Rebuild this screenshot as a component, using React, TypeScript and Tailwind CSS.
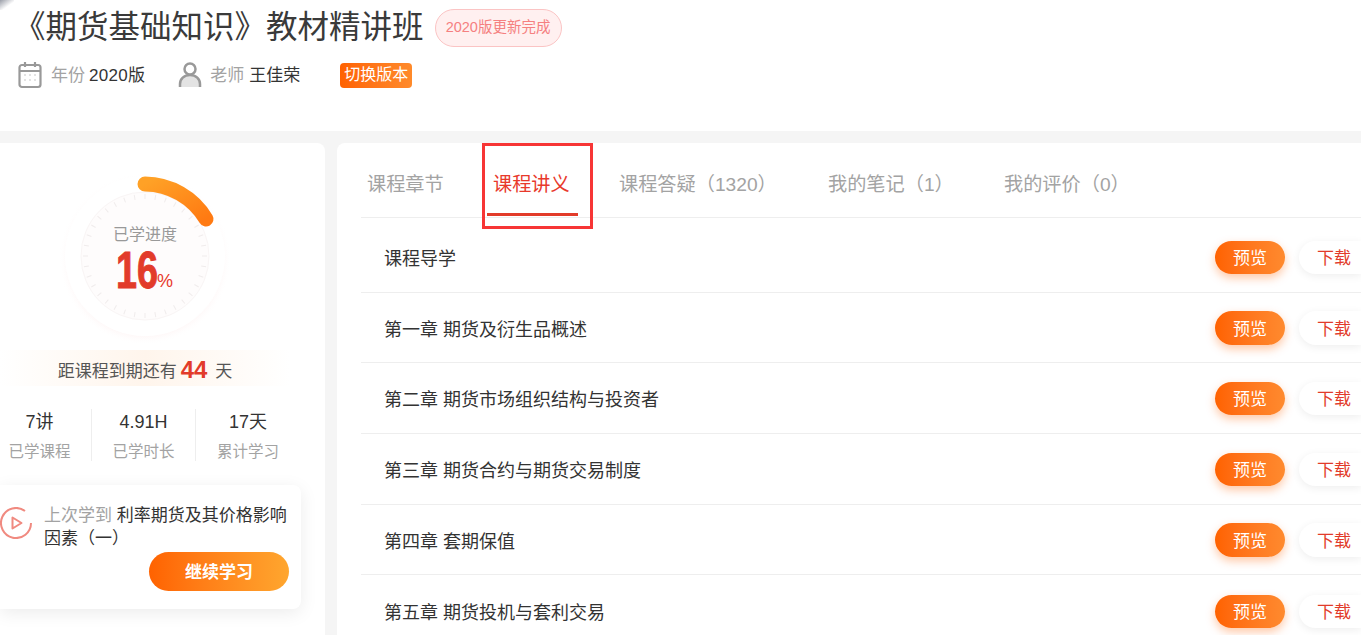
import { useId } from "react";

const cjk = "font-['Liberation_Sans','Noto_Sans_CJK_SC',sans-serif]";

const tabs = [
  { label: "课程章节", width: "w-[126px]" },
  { label: "课程讲义", active: true, width: "w-[126px]" },
  { label: "课程答疑（1320）", width: "w-[209px]" },
  { label: "我的笔记（1）", width: "w-[176px]" },
  { label: "我的评价（0）", width: "w-[140px]" },
];

const chapters = [
  "课程导学",
  "第一章 期货及衍生品概述",
  "第二章 期货市场组织结构与投资者",
  "第三章 期货合约与期货交易制度",
  "第四章 套期保值",
  "第五章 期货投机与套利交易",
];

const stats = [
  { value: "7讲", label: "已学课程" },
  { value: "4.91H", label: "已学时长" },
  { value: "17天", label: "累计学习" },
];

function ProgressRing() {
  const id = useId();
  const ticks = Array.from({ length: 36 }, (_, i) => i * 10);
  return (
    <svg width="176" height="176" viewBox="0 0 176 176" className="absolute left-0 top-0">
      <defs>
        <linearGradient id={id + "arc"} x1="0" y1="0" x2="1" y2="1">
          <stop offset="0" stopColor="#ffa126" />
          <stop offset="1" stopColor="#ff7a12" />
        </linearGradient>
        <radialGradient id={id + "glow"}>
          <stop offset="0.84" stopColor="#fdeeee" stopOpacity="0.9" />
          <stop offset="1" stopColor="#ffffff" stopOpacity="0" />
        </radialGradient>
      </defs>
      <circle cx="88" cy="90" r="86" fill={`url(#${id}glow)`} />
      <circle cx="88" cy="87" r="80" fill="#ffffff" />
      <circle cx="88" cy="87" r="64" fill="#fefcfc" stroke="#f9f5f5" strokeWidth="1" />
      {ticks.map((a) => (
        <line
          key={a}
          x1="88"
          y1="25"
          x2="88"
          y2="30"
          stroke="#f0ecec"
          strokeWidth="1"
          transform={`rotate(${a} 88 87)`}
        />
      ))}
      <path
        d="M 88 15 A 72 72 0 0 1 149 50"
        fill="none"
        stroke={`url(#${id}arc)`}
        strokeWidth="15"
        strokeLinecap="round"
      />
    </svg>
  );
}

function CalendarIcon() {
  return (
    <svg width="24" height="28" viewBox="0 0 24 28" fill="none" stroke="#999" strokeWidth="2.200">
      <rect x="1.500" y="4" width="21" height="22" rx="2.500" />
      <path d="M1.500 10h21M7 1v5M17 1v5" />
      <path d="M6 14h2M11 14h2M16 14h2M6 19h2M11 19h2M16 19h2" stroke="#e3e3e3" />
    </svg>
  );
}

function UserIcon() {
  return (
    <svg width="24" height="28" viewBox="0 0 24 28" fill="none">
      <path d="M2 26v-3c0-5 4-9 10-9s10 4 10 9v3z" fill="#e3e3e3" />
      <path d="M2 26v-3c0-5 4-9 10-9s10 4 10 9v3" stroke="#999" strokeWidth="2.500" />
      <circle cx="12" cy="8" r="5.500" stroke="#999" strokeWidth="2.500" fill="#fff" />
    </svg>
  );
}

function PlayIcon() {
  return (
    <svg width="32" height="32" viewBox="0 0 32 32" fill="none" stroke="#f08a80" strokeWidth="2">
      <path d="M25 4A15 15 0 1 0 31 16" />
      <path d="M12.500 10.500v11l9-5.500z" strokeLinejoin="round" />
    </svg>
  );
}

export default function App() {
  return (
    <div className={`${cjk} relative h-[635px] w-[1361px] overflow-hidden bg-[#f5f5f5] text-[#333]`}>
      <div className="absolute left-0 top-0 h-[10px] w-[14px] bg-gradient-to-br from-[#9a9ea8] to-transparent to-60%" />
      <header className="h-[131px] bg-white pl-[18px] pt-[9px]">
        <div className="flex h-[38px] items-center">
          <h1 className="ml-[-4px] mt-[-2px] text-[31.5px] leading-[38px] text-[#3a3a3a]">《期货基础知识》教材精讲班</h1>
          <span className="ml-[11px] flex h-[38px] w-[127px] items-center justify-center rounded-full border border-[#fbc4c4] bg-[#fff0f0] text-[14.5px] text-[#f58080]">
            2020版更新完成
          </span>
        </div>
        <div className="mt-[14px] flex h-[28px] items-center text-[17px]">
          <CalendarIcon />
          <span className="ml-[9px] pt-[1px] text-[#a3a3a3]">年份</span>
          <span className="ml-[4px] pt-[1px] tracking-[0.3px] text-[#333]">2020版</span>
          <span className="ml-[33px]">
            <UserIcon />
          </span>
          <span className="ml-[8px] pt-[1px] text-[#a3a3a3]">老师</span>
          <span className="ml-[5px] pt-[1px] text-[#333]">王佳荣</span>
          <span className="ml-[40px] flex h-[25px] w-[72px] items-center justify-center rounded-[4px] bg-gradient-to-r from-[#ff6200] to-[#ff8a2a] text-[16px] text-white">
            切换版本
          </span>
        </div>
      </header>

      <main className="mt-[12px] flex gap-[12px]">
        <aside className="h-[600px] w-[325px] shrink-0 rounded-r-[8px] bg-white pt-[26px]">
          <div className="relative ml-[57px] h-[176px] w-[176px]">
            <ProgressRing />
            <div className="absolute left-0 top-[55px] w-full text-center text-[16px] leading-[22px] text-[#999]">
              已学进度
            </div>
            <span className="absolute left-[59px] top-[77px] origin-left scale-x-[0.74] font-['Liberation_Sans',sans-serif] text-[51px] font-bold leading-[50px] text-[#e23b2a] [-webkit-text-stroke:1px_#e23b2a]">
              16
            </span>
            <span className="absolute left-[100px] top-[102px] font-['Liberation_Sans',sans-serif] text-[18px] leading-[20px] text-[#e8392b]">
              %
            </span>
          </div>
          <div className="mt-[5px] flex h-[36px] w-[290px] items-center justify-center bg-gradient-to-r from-white via-[#fff5ec] to-white pt-[7px] text-[17px] text-[#555]">
            <span>距课程到期还有</span>
            <span className="mx-[4px] mt-[-4px] text-[24px] font-bold leading-[30px] text-[#e23b2a]">44</span>
            <span className="ml-[4px]">天</span>
          </div>
          <div className="ml-[-12px] mt-[23px] flex h-[52px]">
            {stats.map((s, i) => (
              <div
                key={s.label}
                className={`flex w-[104px] flex-col items-center ${i < 2 ? "border-r border-[#eee]" : ""}`}
              >
                <span className="text-[18px] leading-[26px] text-[#333]">{s.value}</span>
                <span className="mt-[6px] text-[15.5px] leading-[22px] text-[#a3a3a3]">{s.label}</span>
              </div>
            ))}
          </div>
          <div className="mt-[24px] h-[124px] w-[301px] rounded-r-[8px] bg-white pr-[12px] pt-[19px] shadow-[0_4px_18px_rgba(0,0,0,0.08)]">
            <div className="flex">
              <span className="mt-[3px] shrink-0">
                <PlayIcon />
              </span>
              <p className="ml-[12px] text-[17px] leading-[23px] text-[#333]">
                <span className="text-[#a3a3a3]">上次学到</span> 利率期货及其价格影响因素（一）
              </p>
            </div>
            <div className="mt-[2px] flex justify-end">
              <button className="h-[39px] w-[140px] rounded-full bg-gradient-to-r from-[#ff6200] to-[#ffa62e] pt-[3px] text-[17px] font-bold text-white">
                继续学习
              </button>
            </div>
          </div>
        </aside>

        <section className="h-[600px] flex-1 rounded-tl-[8px] bg-white pl-[24px]">
          <nav className="flex h-[75px] border-b border-[#eee]">
            {tabs.map((t) => (
              <div key={t.label} className={`relative ${t.width} pl-[6px] pt-[28px] text-[19.2px] leading-[28px] ${t.active ? "text-[#e8392b]" : "text-[#a3a3a3]"}`}>
                <span>{t.label}</span>
                {t.active && (
                  <>
                    <span className="absolute bottom-[1px] left-0 h-[3px] w-[91px] bg-[#e23b2a]" />
                    <span className="absolute left-[-5px] top-0 h-[86px] w-[111px] border-[3px] border-[#f73535]" />
                  </>
                )}
              </div>
            ))}
          </nav>
          <div className="pt-[4px]">
            {chapters.map((c) => (
              <div key={c} className="flex h-[70.7px] items-center justify-between border-b border-[#eee] pl-[23px] last:border-b-0">
                <span className="pt-[5px] text-[18px] text-[#333]">{c}</span>
                <div className="mt-[1px] flex">
                  <button className="h-[33.5px] w-[70px] rounded-full bg-gradient-to-r from-[#ff6200] to-[#ff8a2e] pt-[3px] text-[17px] text-white shadow-[0_4px_10px_rgba(255,98,0,0.35)]">
                    预览
                  </button>
                  <button className="ml-[14px] h-[33.5px] w-[62px] rounded-l-full bg-white pl-[7px] pt-[3px] text-left text-[17px] text-[#e23b2a] shadow-[0_2px_8px_rgba(0,0,0,0.07)]">
                    <span className="ml-[11px]">下载</span>
                  </button>
                </div>
              </div>
            ))}
          </div>
        </section>
      </main>
    </div>
  );
}
